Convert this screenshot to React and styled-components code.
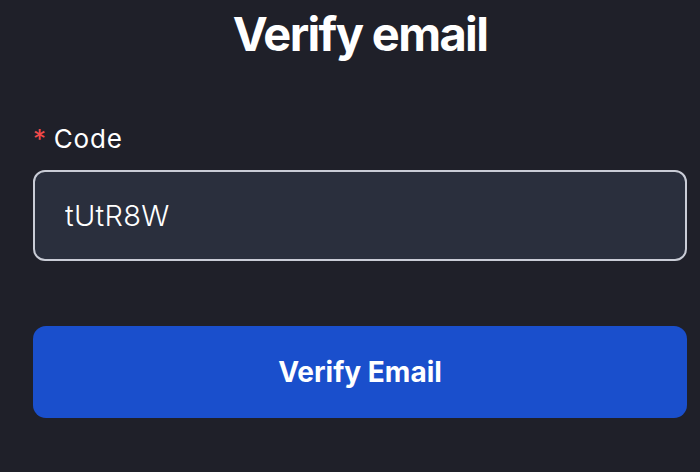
import React from "react";
import styled, { createGlobalStyle } from "styled-components";

const GlobalStyle = createGlobalStyle`
  html, body {
    margin: 0;
    background: #1f2029;
    font-family: Inter, "Noto Sans", sans-serif;
  }
`;

const Page = styled.div`
  width: 700px;
  height: 472px;
  box-sizing: border-box;
  padding: 0 13px 0 33px;
  background: #1f2029;
  overflow: hidden;
`;

const Title = styled.h1`
  margin: 0;
  padding-top: 5px;
  text-align: center;
  color: #ffffff;
  font-size: 47px;
  line-height: 58px;
  font-weight: 700;
  letter-spacing: -0.035em;
`;

const Field = styled.div`
  margin-top: 61px;
  display: flex;
  flex-direction: column;
  gap: 16px;
`;

const Label = styled.label`
  display: flex;
  align-items: center;
  gap: 7px;
  color: #ffffff;
  font-size: 26px;
  line-height: 30px;
  font-weight: 400;
  letter-spacing: 0.03em;
`;

const Required = styled.span`
  color: #f24a4a;
  font-size: 26px;
`;

const Input = styled.input`
  box-sizing: border-box;
  width: 100%;
  height: 91px;
  padding: 0 30px;
  background: #2a2f3d;
  border: 2px solid #c9ccd6;
  border-radius: 12px;
  color: #ffffff;
  font-family: inherit;
  font-size: 29px;
  font-weight: 300;
  letter-spacing: 0.01em;
  outline: none;
`;

const Button = styled.button`
  margin-top: 65px;
  width: 100%;
  height: 92px;
  border: none;
  border-radius: 13px;
  background: #1a4fcc;
  color: #ffffff;
  font-family: inherit;
  font-size: 28px;
  font-weight: 700;
  letter-spacing: 0;
  cursor: pointer;
`;

const App = () => {
  return (
    <>
      <GlobalStyle />
      <Page>
        <Title>Verify email</Title>
        <Field>
          <Label>
            <Required>*</Required>
            Code
          </Label>
          <Input type="text" defaultValue="tUtR8W" />
        </Field>
        <Button>Verify Email</Button>
      </Page>
    </>
  );
};

export default App;
